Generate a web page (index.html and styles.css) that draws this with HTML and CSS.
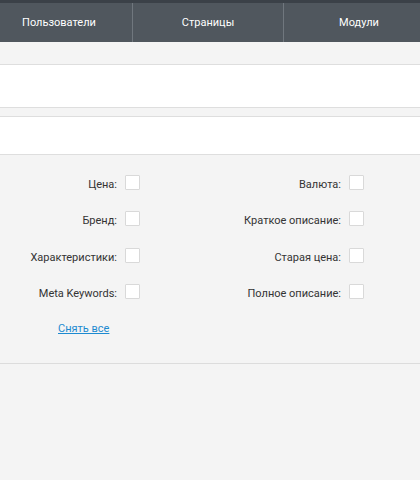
FILE: index.html
```html
<!DOCTYPE html>
<html>
<head>
<meta charset="utf-8">
<link rel="stylesheet" href="styles.css">
</head>
<body>
<div class="topstrip"></div>
<nav class="nav">
  <div class="nav-item nav-first">Пользователи</div>
  <div class="nav-item">Страницы</div>
  <div class="nav-item">Модули</div>
</nav>
<div class="content">
  <div class="panel panel-a"></div>
  <div class="panel panel-b"></div>
  <div class="fields">
    <div class="field"><span class="label">Цена:</span><span class="check"></span></div>
    <div class="field"><span class="label">Валюта:</span><span class="check"></span></div>
    <div class="field"><span class="label">Бренд:</span><span class="check"></span></div>
    <div class="field"><span class="label">Краткое описание:</span><span class="check"></span></div>
    <div class="field"><span class="label">Характеристики:</span><span class="check"></span></div>
    <div class="field"><span class="label">Старая цена:</span><span class="check"></span></div>
    <div class="field"><span class="label">Meta Keywords:</span><span class="check"></span></div>
    <div class="field"><span class="label">Полное описание:</span><span class="check"></span></div>
  </div>
  <div class="actions"><a class="link" href="#">Снять все</a></div>
  <div class="divider"></div>
</div>
</body>
</html>
```
FILE: styles.css
```css
html, body {
  margin: 0;
  padding: 0;
  background: #f4f4f4;
  font-family: Roboto, "Liberation Sans", Arial, sans-serif;
  font-size: 11px;
  color: #333;
  overflow: hidden;
}
.topstrip {
  height: 3px;
  background: #3b4148;
}
.nav {
  display: flex;
  height: 39px;
  background: #50575e;
  overflow: hidden;
}
.nav-item {
  flex: 0 0 150px;
  display: flex;
  align-items: center;
  justify-content: center;
  color: #fff;
  font-size: 11px;
  border-right: 1px solid #70777e;
}
.nav-first {
  flex: 0 0 118px;
  padding-right: 14px;
}
.content {
  padding-top: 22px;
}
.panel {
  background: #fff;
  border-top: 1px solid #dedede;
  border-bottom: 1px solid #dedede;
}
.panel-a {
  height: 42px;
}
.panel-b {
  height: 37px;
  margin-top: 8px;
}
.fields {
  display: grid;
  grid-template-columns: 224px 196px;
  row-gap: 21.4px;
  padding-top: 20px;
}
.field {
  display: flex;
  align-items: center;
  height: 15px;
}
.label {
  width: 117px;
  flex: 0 0 117px;
  text-align: right;
  margin-right: 8px;
  line-height: 15px;
  position: relative;
  top: 2px;
  white-space: nowrap;
}
.check {
  width: 13px;
  height: 13px;
  background: #fff;
  border: 1px solid #d9d9d9;
  border-radius: 1px;
}
.actions {
  padding-top: 23px;
  padding-left: 58px;
}
.link {
  color: #1d8ad0;
  text-decoration: underline;
  font-size: 11px;
}
.divider {
  margin-top: 28px;
  border-top: 1px solid #dcdcdc;
}
```
